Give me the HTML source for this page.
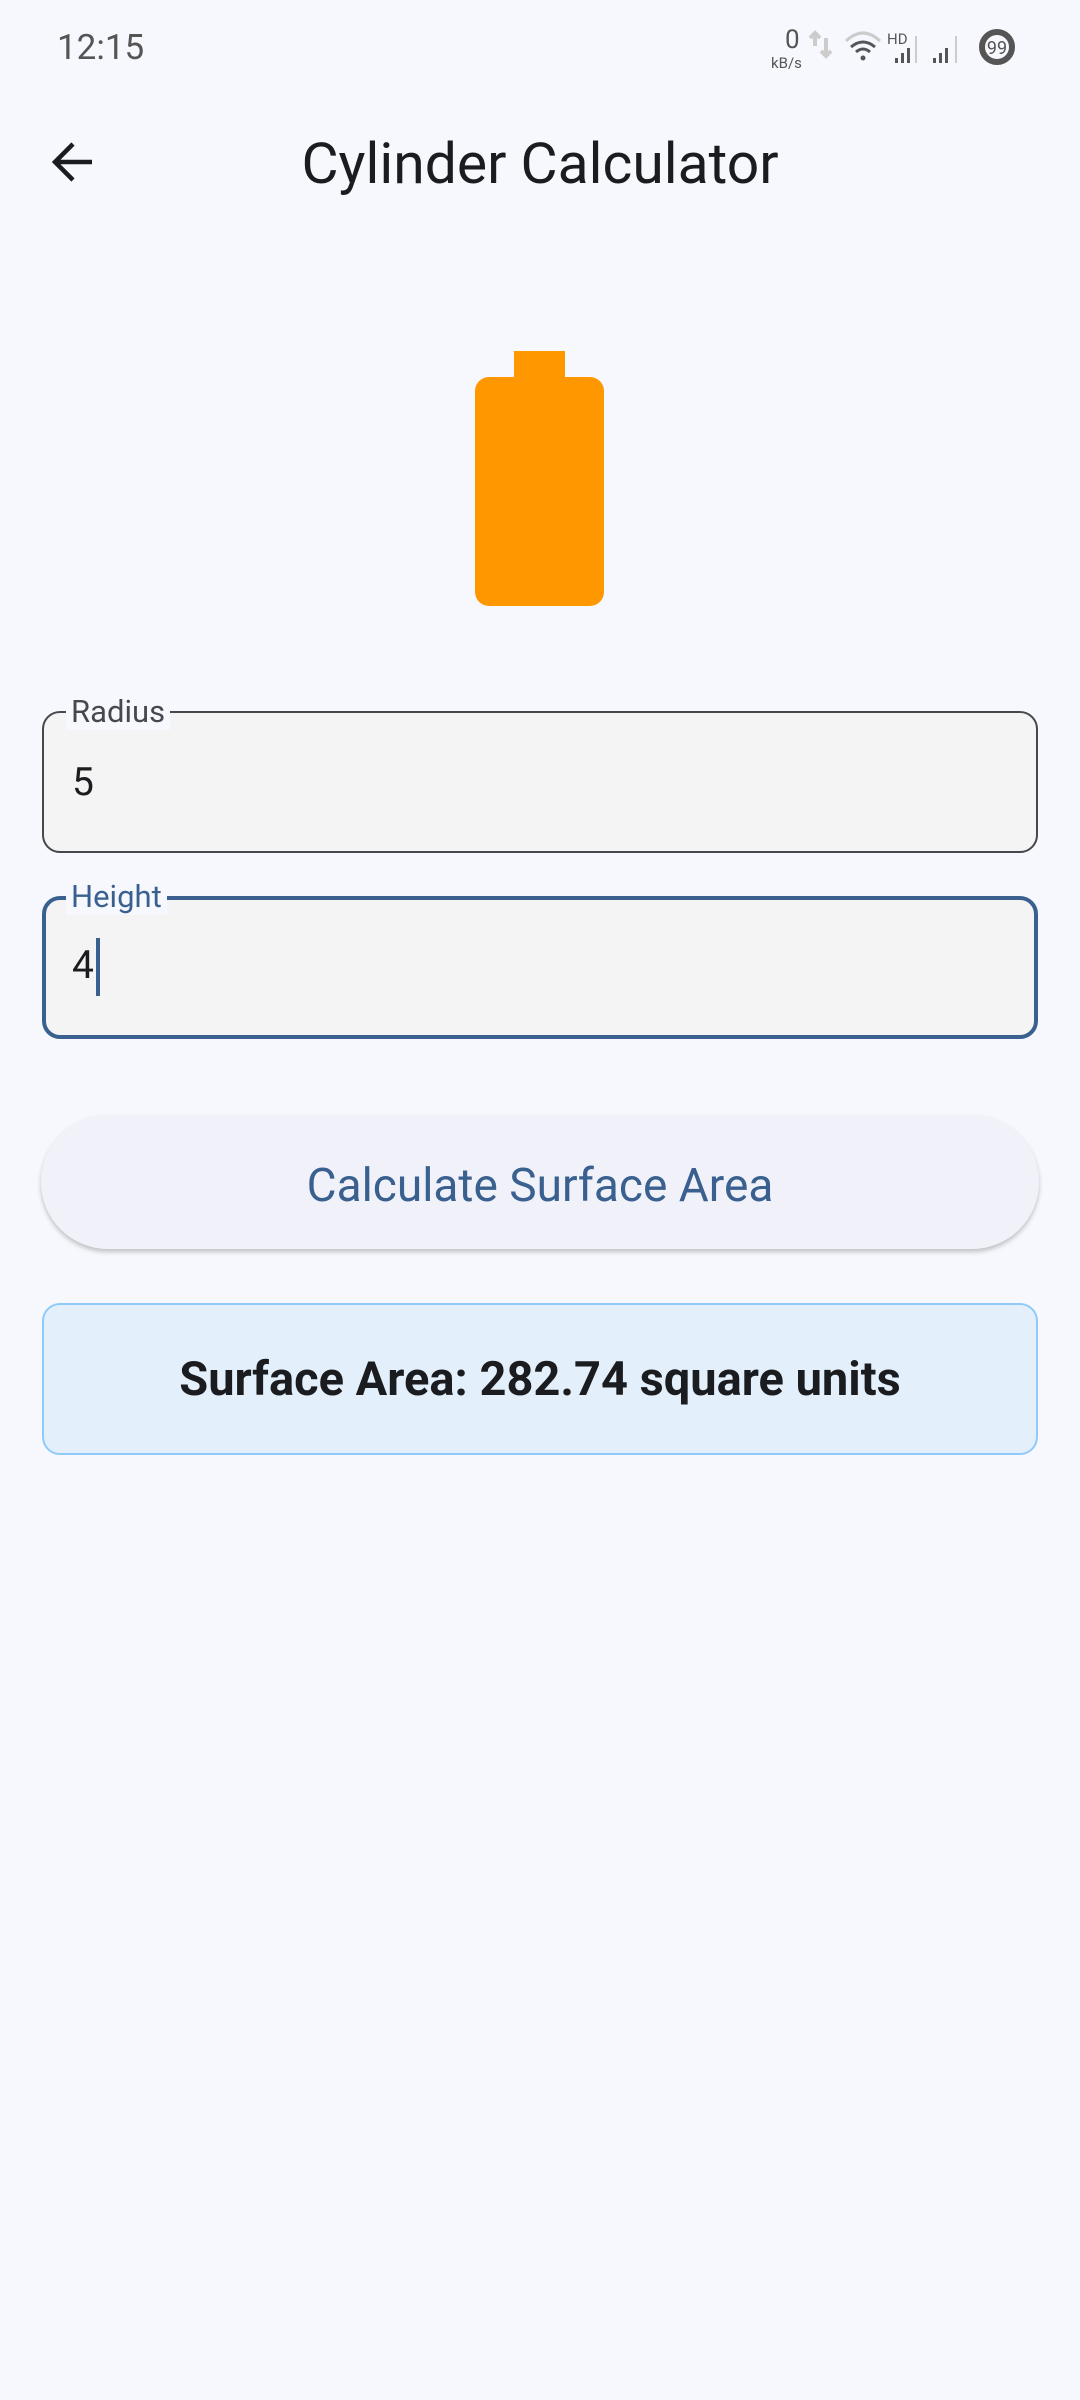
<!DOCTYPE html>
<html><head><meta charset="utf-8"><style>
*{margin:0;padding:0;box-sizing:border-box}
body{width:1080px;height:2400px;background:#f7f8fd;position:relative;overflow:hidden;font-family:"Roboto","Liberation Sans",sans-serif}
.abs{position:absolute}
.time{left:57px;top:27px;font-size:35px;color:#555}
.title{left:0;width:1080px;top:130px;text-align:center;font-size:57px;color:#1b1c20}
.field{left:42px;width:996px;background:#f4f4f4;border-radius:18px}
.lbl{font-size:31px;background:#f7f8fd;padding:0 5px;left:22px;top:-19px;line-height:36px}
.val{font-size:39px;color:#1b1c20;left:29px}
</style></head><body>
<div class="abs time">12:15</div>
<div class="abs" style="left:785px;top:25px;font-size:26px;color:#555">0</div>
<div class="abs" style="left:771px;top:54px;font-size:15px;color:#555">kB/s</div>
<svg class="abs" style="left:805px;top:28px" width="260" height="50" viewBox="805 28 260 50">
<path d="M815 46V33M810 38l5-5 5 5" stroke="#ccc" stroke-width="4" fill="none"/>
<path d="M826 38v18M821 51l5 5 5-5" stroke="#ccc" stroke-width="4" fill="none"/>
<path d="M846 41q17-16 34 0" stroke="#ccc" stroke-width="3" fill="none"/>
<path d="M851 47q12-10 24 0M856 52q7-6 14 0" stroke="#555" stroke-width="3" fill="none"/>
<circle cx="863" cy="58" r="2.5" fill="#555"/>
<text x="887" y="44" font-size="15" fill="#555" font-family="Roboto, Liberation Sans">HD</text>
<rect x="895" y="58" width="3" height="5" fill="#555"/><rect x="901" y="53" width="3" height="10" fill="#555"/><rect x="907" y="48" width="3" height="15" fill="#555"/><rect x="915" y="36" width="2" height="27" fill="#ccc"/>
<rect x="933" y="58" width="3" height="5" fill="#555"/><rect x="939" y="53" width="3" height="10" fill="#555"/><rect x="945" y="48" width="3" height="15" fill="#555"/><rect x="955" y="36" width="2" height="27" fill="#ccc"/>
<circle cx="997" cy="47" r="15" fill="none" stroke="#555" stroke-width="6"/>
<text x="997" y="54" font-size="18" fill="#555" text-anchor="middle" font-family="Roboto, Liberation Sans">99</text>
</svg>
<svg class="abs" style="left:48px;top:140px" width="50" height="44" viewBox="0 0 50 44"><path d="M44 22H8M25 4L7 22l18 18" stroke="#1b1c20" stroke-width="4.5" fill="none"/></svg>
<div class="abs title">Cylinder Calculator</div>
<div class="abs" style="left:514px;top:351px;width:51px;height:30px;background:#ff9800"></div>
<div class="abs" style="left:475px;top:377px;width:129px;height:229px;background:#ff9800;border-radius:14px"></div>
<div class="abs field" style="top:711px;height:142px;border:2.5px solid #47484d">
<div class="abs lbl" style="color:#47484d">Radius</div>
<div class="abs val" style="top:46px;left:28px">5</div></div>
<div class="abs field" style="top:896px;height:143px;border:4.5px solid #3a6090">
<div class="abs lbl" style="color:#3a6090;left:20px;top:-21px">Height</div>
<div class="abs val" style="top:42px;left:26px">4</div>
<div class="abs" style="left:50px;top:38px;width:4px;height:58px;background:#3a6090"></div></div>
<div class="abs" style="left:41px;top:1115px;width:998px;height:134px;border-radius:67px;background:#f1f2f9;box-shadow:0 3px 5px rgba(0,0,0,0.22);text-align:center;line-height:142px;font-size:46px;color:#3a6090">Calculate Surface Area</div>
<div class="abs" style="left:42px;top:1303px;width:996px;height:152px;border-radius:18px;background:#e3f0fc;border:2px solid #90caf9;text-align:center;line-height:150px;font-size:47px;font-weight:bold;color:#1b1c20">Surface Area: 282.74 square units</div>
</body></html>
